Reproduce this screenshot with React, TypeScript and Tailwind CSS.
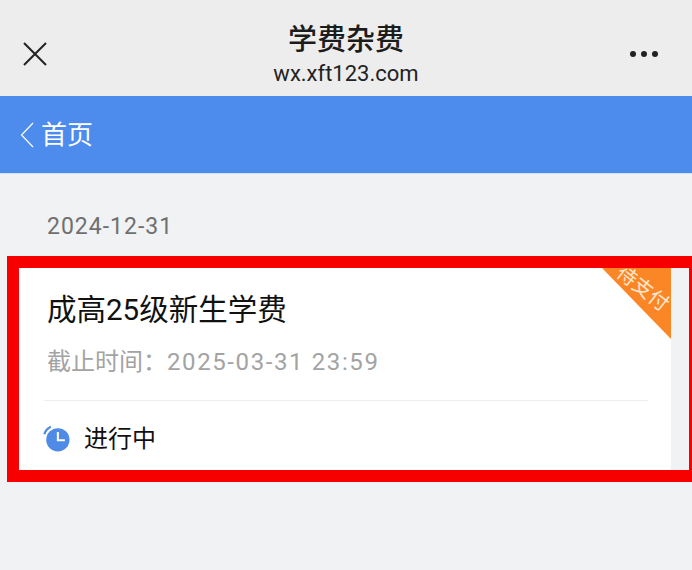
export default function App() {
	return (
		<div className="h-[570px] w-[692px] overflow-hidden bg-[#f0f2f3] font-['Roboto','Noto_Sans_CJK_SC',sans-serif]">
			{/* WeChat title bar */}
			<div className="grid h-[96px] grid-cols-[1fr_auto_1fr] items-center bg-[#ededed] px-[23px]">
				<svg className="mt-[11px] h-[24px] w-[24px] text-[#222]" fill="none" stroke="currentColor" viewBox="0 0 24 24">
					<path strokeWidth={2} d="M1 1l22 22M23 1L1 23" />
				</svg>
				<div className="pt-[13px] text-center">
					<p className="text-[29px] leading-[38px] font-medium text-[#1c1c1c]">学费杂费</p>
					<p className="mt-[1px] text-[22px] leading-[28px] text-[#222]">wx.xft123.com</p>
				</div>
				<div className="mt-[11px] mr-[11px] flex justify-end gap-[5px]">
					<span className="h-[6px] w-[6px] rounded-full bg-[#222]"></span>
					<span className="h-[6px] w-[6px] rounded-full bg-[#222]"></span>
					<span className="h-[6px] w-[6px] rounded-full bg-[#222]"></span>
				</div>
			</div>

			{/* Back bar */}
			<div className="flex h-[78px] items-center gap-[7px] border-b border-[#cfe3f7] bg-[#4d8bec] pl-[20px] text-white">
				<svg className="h-[26px] w-[14px]" fill="none" stroke="currentColor" viewBox="0 0 14 26">
					<path strokeWidth={1.2} d="M13 1L1.5 13 13 25" />
				</svg>
				<span className="text-[26px] leading-none">首页</span>
			</div>

			<p className="mt-[39px] pl-[47px] text-[23px] leading-[28px] tracking-[1px] text-[#6f6f6f]">2024-12-31</p>

			{/* Highlighted card */}
			<div className="mt-[15px] ml-[7px] h-[226px] border-[12px] border-r-[3px] border-[#f60000] pr-[18px]">
				<div className="relative h-full overflow-hidden bg-white pr-[23px] pl-[25px]">
					<div className="absolute top-0 right-0 h-0 w-0 border-t-[71px] border-l-[69px] border-t-[#fb8626] border-l-transparent"></div>
					<span className="absolute top-[10px] right-[-2px] rotate-[38deg] text-[20px] leading-none text-[#ffe6cf]">待支付</span>
					<p className="pt-[24px] pl-[3px] text-[29.5px] leading-[36px] text-[#111]">成高25级新生学费</p>
					<p className="mt-[18px] pl-[3px] text-[24px] leading-[32px] text-[#a3a3a3]">
						截止时间：<span className="tracking-[1.6px]">2025-03-31 23:59</span>
					</p>
					<div className="mt-[22px] flex h-[68px] items-center border-t border-[#eeeeee]">
						<svg className="mt-[6px] ml-[-2px] h-[28px] w-[28px]" viewBox="0 0 30 30">
							<circle cx="17" cy="17" r="12.5" fill="#4e8ae6" />
							<path d="M17 8.5v9h7.5" fill="none" stroke="#fff" strokeWidth={2.2} />
							<path d="M2.5 11C3.5 7.5 6 4.5 9.5 3" fill="none" stroke="#4e8ae6" strokeWidth={2.4} />
						</svg>
						<span className="mt-[8px] ml-[14px] text-[24px] leading-none text-[#111]">进行中</span>
					</div>
				</div>
			</div>
		</div>
	);
}
